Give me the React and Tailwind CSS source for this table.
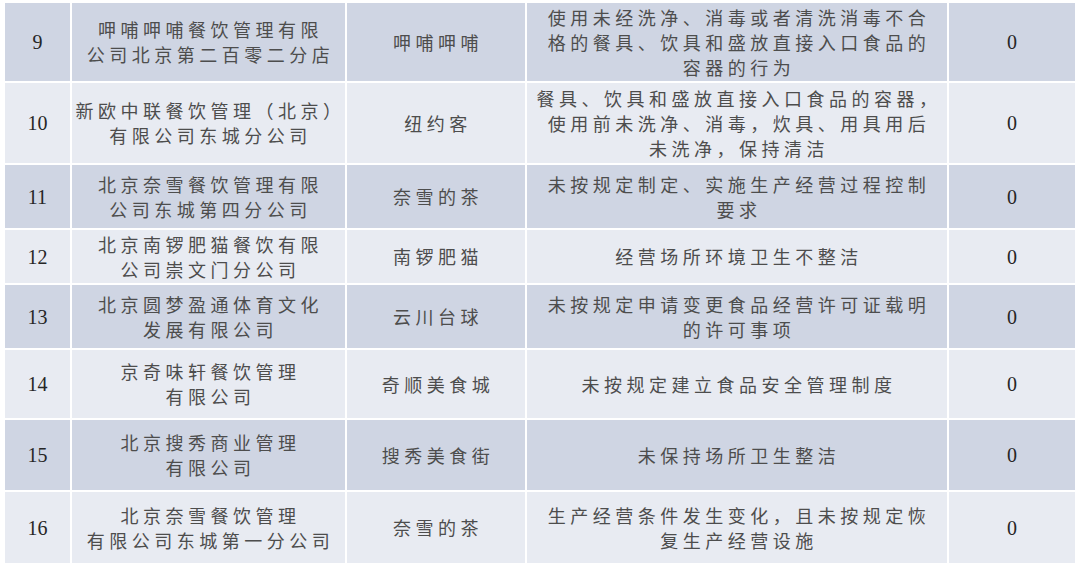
const rows = [
  {
    no: "9",
    h: "h-[78px]",
    dark: true,
    company: ["呷哺呷哺餐饮管理有限", "公司北京第二百零二分店"],
    shop: "呷哺呷哺",
    issue: ["使用未经洗净、消毒或者清洗消毒不合", "格的餐具、饮具和盛放直接入口食品的", "容器的行为"],
  },
  {
    no: "10",
    h: "h-[80px]",
    dark: false,
    company: ["新欧中联餐饮管理（北京）", "有限公司东城分公司"],
    shop: "纽约客",
    issue: ["餐具、饮具和盛放直接入口食品的容器，", "使用前未洗净、消毒，炊具、用具用后", "未洗净，保持清洁"],
  },
  {
    no: "11",
    h: "h-[63px]",
    dark: true,
    company: ["北京奈雪餐饮管理有限", "公司东城第四分公司"],
    shop: "奈雪的茶",
    issue: ["未按规定制定、实施生产经营过程控制", "要求"],
  },
  {
    no: "12",
    h: "h-[53px]",
    dark: false,
    company: ["北京南锣肥猫餐饮有限", "公司崇文门分公司"],
    shop: "南锣肥猫",
    issue: ["经营场所环境卫生不整洁"],
  },
  {
    no: "13",
    h: "h-[63px]",
    dark: true,
    company: ["北京圆梦盈通体育文化", "发展有限公司"],
    shop: "云川台球",
    issue: ["未按规定申请变更食品经营许可证载明", "的许可事项"],
  },
  {
    no: "14",
    h: "h-[68px]",
    dark: false,
    company: ["京奇味轩餐饮管理", "有限公司"],
    shop: "奇顺美食城",
    issue: ["未按规定建立食品安全管理制度"],
  },
  {
    no: "15",
    h: "h-[70px]",
    dark: true,
    company: ["北京搜秀商业管理", "有限公司"],
    shop: "搜秀美食街",
    issue: ["未保持场所卫生整洁"],
  },
  {
    no: "16",
    h: "h-[71px]",
    dark: false,
    company: ["北京奈雪餐饮管理", "有限公司东城第一分公司"],
    shop: "奈雪的茶",
    issue: ["生产经营条件发生变化，且未按规定恢", "复生产经营设施"],
  },
];

const cjk = "font-['Noto_Sans_CJK_SC',sans-serif] text-[18px] leading-[25px] tracking-[4.5px] text-[#4d4d4d]";
const num = "font-['Liberation_Serif','Times_New_Roman',serif] text-[20px] text-[#262626]";

const Lines = ({ lines }) => (
  <div className={`${cjk} pl-[4px]`}>
    {lines.map((l, i) => (
      <div key={i} className="whitespace-nowrap">
        {l}
      </div>
    ))}
  </div>
);

const App = () => {
  return (
    <div className="w-[1080px] h-[564px] bg-white overflow-hidden">
      <div className="flex flex-col gap-[2px] pl-[5px] pt-[3px]">
        {rows.map((r) => {
          const bg = r.dark ? "bg-[#cfd5e3]" : "bg-[#e8ebf2]";
          const cell = `${bg} flex items-center justify-center text-center`;
          return (
            <div
              key={r.no}
              className={`grid grid-cols-[65px_273px_178px_420px_126px] gap-[2px] ${r.h}`}
            >
              <div className={cell}>
                <span className={num}>{r.no}</span>
              </div>
              <div className={cell}>
                <Lines lines={r.company} />
              </div>
              <div className={cell}>
                <Lines lines={[r.shop]} />
              </div>
              <div className={cell}>
                <Lines lines={r.issue} />
              </div>
              <div className={cell}>
                <span className={num}>0</span>
              </div>
            </div>
          );
        })}
      </div>
    </div>
  );
};

export default App;
